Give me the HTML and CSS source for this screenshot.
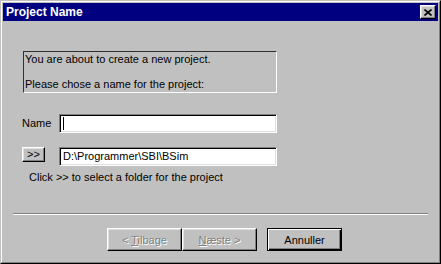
FILE: index.html
```html
<!DOCTYPE html>
<html lang="en">
<head>
    <meta charset="UTF-8">
    <title>Project Name</title>
    <link rel="stylesheet" href="styles.css">
</head>
<body>
    <div class="window">
        <div class="frame">
            <div class="titlebar">
                <span class="title">Project Name</span>
                <div class="closeButton">
                    <svg width="8" height="7" viewBox="0 0 8 7">
                        <path d="M0.5 0.5 L7.5 6.5 M7.5 0.5 L0.5 6.5" stroke="#000" stroke-width="1.6" fill="none"/>
                    </svg>
                </div>
            </div>
            <div class="content">
                <div class="infoBox">
                    <div class="line1">You are about to create a new project.</div>
                    <div class="line2">Please chose a name for the project:</div>
                </div>
                <div class="fields">
                    <div class="label">Name</div>
                    <div class="textField"><span class="caret"></span></div>
                    <div><div class="browseButton">&gt;&gt;</div></div>
                    <div class="textField">D:\Programmer\SBI\BSim</div>
                </div>
                <div class="hint">Click &gt;&gt; to select a folder for the project</div>
                <div class="separator"></div>
                <div class="buttons">
                    <div class="button disabled"><span>&lt; <u>T</u>ilbage</span></div>
                    <div class="button disabled"><span><u>N</u>æste &gt;</span></div>
                    <div class="button default"><span>Annuller</span></div>
                </div>
            </div>
        </div>
    </div>
</body>
</html>
```

FILE: styles.css
```css
body{
    margin: 0;
    font-family: "Liberation Sans", Arial, sans-serif;
    font-size: 11px;
    color: #000;
}
.window{
    width: 441px;
    height: 264px;
    box-sizing: border-box;
    border: 1px solid;
    border-color: #c0c0c0 #000 #000 #c0c0c0;
    background-color: #c0c0c0;
}
.frame{
    height: 100%;
    box-sizing: border-box;
    border: 1px solid;
    border-color: #fff #808080 #808080 #fff;
    padding: 1px;
}
.titlebar{
    height: 18px;
    background-color: #000080;
    display: flex;
    justify-content: space-between;
    align-items: center;
    padding: 0 2px 0 3px;
}
.title{
    color: #fff;
    font-weight: bold;
    font-size: 12px;
}
.closeButton{
    width: 16px;
    height: 14px;
    box-sizing: border-box;
    border: 1px solid;
    border-color: #fff #000 #000 #fff;
    box-shadow: inset -1px -1px #808080, inset 1px 1px #dfdfdf;
    background-color: #c0c0c0;
    display: flex;
    justify-content: center;
    align-items: center;
}
.content{
    display: flex;
    flex-direction: column;
}
.infoBox{
    margin: 30px 0 0 20px;
    width: 254px;
    height: 42px;
    box-sizing: border-box;
    border: 1px solid;
    border-color: #303030 #fff #fff #303030;
    padding: 1px 0 0 1px;
    line-height: 13px;
}
.line2{
    margin-top: 12px;
}
.fields{
    display: grid;
    grid-template-columns: 37px 218px;
    row-gap: 14px;
    margin: 21px 0 0 19px;
    align-items: center;
}
.label{
    padding-bottom: 2px;
}
.textField{
    height: 19px;
    box-sizing: border-box;
    border: 1px solid;
    border-color: #808080 #fff #fff #808080;
    box-shadow: inset 1px 1px #000, inset -1px -1px #dfdfdf;
    background-color: #fff;
    padding: 2px 3px;
    line-height: 13px;
    display: flex;
    align-items: center;
}
.caret{
    width: 1px;
    height: 13px;
    background-color: #000;
}
.browseButton{
    width: 23px;
    height: 15px;
    box-sizing: border-box;
    border: 1px solid;
    border-color: #fff #000 #000 #fff;
    box-shadow: inset -1px -1px #808080, inset 1px 1px #dfdfdf;
    text-align: center;
    line-height: 12px;
    margin-bottom: 4px;
}
.hint{
    margin: 5px 0 0 26px;
    line-height: 13px;
}
.separator{
    margin: 29px 0 0 10px;
    width: 415px;
    height: 0;
    border-top: 1px solid #808080;
    border-bottom: 1px solid #fff;
}
.buttons{
    display: flex;
    margin: 13px 0 0 104px;
}
.button{
    width: 75px;
    height: 23px;
    box-sizing: border-box;
    border: 1px solid;
    border-color: #fff #000 #000 #fff;
    box-shadow: inset -1px -1px #808080, inset 1px 1px #dfdfdf;
    display: flex;
    justify-content: center;
    align-items: center;
}
.disabled{
    color: #808080;
    text-shadow: 1px 1px #fff;
}
.default{
    margin-left: 10px;
    border-color: #000;
    box-shadow: inset 1px 1px #fff, inset -1px -1px #000, inset -2px -2px #808080;
}
```
